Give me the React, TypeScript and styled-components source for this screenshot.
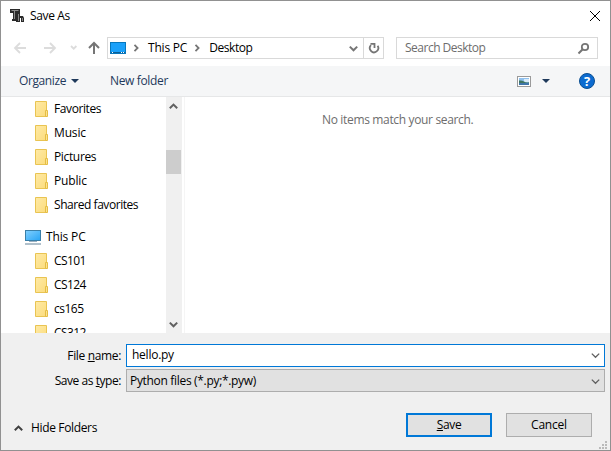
import React from 'react';
import styled, { createGlobalStyle } from 'styled-components';

const GlobalStyle = createGlobalStyle`
  * { box-sizing: border-box; }
  body { margin: 0; overflow: hidden; }
`;

const Dialog = styled.div`
  width: 611px;
  height: 451px;
  border: 1px solid #919191;
  background: #fff;
  color: #000;
  font: 12px/16px "Open Sans", "Noto Sans", sans-serif;
  display: flex;
  flex-direction: column;
  overflow: hidden;
  svg { display: block; flex: none; }
`;

const Label = styled.span<{ $track?: number }>`
  letter-spacing: ${(p) => p.$track ?? -0.35}px;
  white-space: pre;
  flex: none;
`;

const TitleBar = styled.header`
  height: 30px;
  flex: none;
  display: flex;
  align-items: center;
  padding: 0 9px;
`;

const Title = styled(Label)`
  margin-left: 4px;
`;

const CloseButton = styled.button`
  margin-left: auto;
  border: 0;
  padding: 0;
  background: none;
`;

const NavBar = styled.nav`
  height: 35px;
  flex: none;
  display: flex;
  align-items: center;
  padding: 0 12px 1px;
`;

const NavArrows = styled.div`
  width: 94px;
  display: flex;
  align-items: center;
`;

const Field = styled.div`
  height: 22px;
  border: 1px solid #d9d9d9;
  display: flex;
  align-items: center;
`;

const AddressBar = styled(Field)`
  width: 277px;
  padding-left: 2px;
`;

const Crumb = styled(Label)`
  margin-left: 8px;
`;

const AddressEnd = styled.div`
  margin-left: auto;
  display: flex;
  height: 20px;
  align-items: center;
`;

const Refresh = styled.div`
  width: 20px;
  height: 20px;
  margin-left: 5px;
  border-left: 1px solid #d9d9d9;
  display: grid;
  place-items: center;
`;

const SearchBox = styled(Field)`
  width: 202px;
  margin-left: 12px;
  padding: 0 7px 0 8px;
  justify-content: space-between;
  color: #6d6d6d;
`;

const CommandBar = styled.div`
  height: 31px;
  flex: none;
  display: flex;
  align-items: center;
  padding: 0 15px 0 18px;
  background: #f5f6f7;
  border-bottom: 1px solid #e6e7e8;
  color: #1e395b;
`;

const NewFolder = styled(Label)`
  margin-left: 31px;
`;

const Tools = styled.div`
  margin-left: auto;
  display: flex;
  align-items: center;
`;

const Main = styled.main`
  height: 236px;
  flex: none;
  display: flex;
`;

const Tree = styled.div`
  width: 165px;
  overflow: hidden;
`;

const TreeRow = styled.div<{ $root?: boolean }>`
  height: 24px;
  display: flex;
  align-items: center;
  gap: ${(p) => (p.$root ? 5 : 6)}px;
  padding-left: ${(p) => (p.$root ? 24 : 34)}px;
  margin-top: ${(p) => (p.$root ? 8 : 0)}px;
`;

const Scrollbar = styled.div`
  width: 16px;
  background: #f0f0f0;
  display: flex;
  flex-direction: column;
  align-items: center;
  padding: 5px 1px 4px 0;
`;

const Thumb = styled.div`
  width: 15px;
  height: 24px;
  margin: 39px 0 auto;
  background: #cdcdcd;
`;

const FileList = styled.section`
  flex: 1;
  margin-left: 2px;
  border-left: 1px solid #f5f5f5;
  padding: 15px 0 0 137px;
  color: #6d6d6d;
`;

const Footer = styled.footer`
  flex: 1;
  background: #f0f0f0;
  display: flex;
  flex-direction: column;
`;

const Form = styled.div`
  padding-top: 11px;
`;

const FormRow = styled.label`
  display: flex;
  align-items: center;
  height: 23px;
  margin: 0 5px 2px 0;
`;

const FormLabel = styled.span`
  width: 125px;
  padding-right: 5px;
  display: flex;
  justify-content: flex-end;
`;

const Combo = styled.div<{ $focused?: boolean }>`
  flex: 1;
  height: 23px;
  display: flex;
  align-items: center;
  justify-content: space-between;
  padding: ${(p) => (p.$focused ? '0 4px 1px 5px' : '1px 4px 0 3px')};
  border: 1px solid ${(p) => (p.$focused ? '#0078d7' : '#adadad')};
  background: ${(p) => (p.$focused ? '#fff' : '#e1e1e1')};
`;

const Actions = styled.div`
  height: 24px;
  display: flex;
  align-items: flex-start;
  margin-top: 19px;
  padding-left: 13px;
`;

const HideFolders = styled.div`
  width: 392px;
  height: 30px;
  display: flex;
  align-items: center;
  gap: 8px;
`;

const Button = styled.button<{ $primary?: boolean }>`
  width: 86px;
  height: 24px;
  padding: 0 0 1px;
  margin-right: 14px;
  font: inherit;
  color: #000;
  background: #e1e1e1;
  border: ${(p) => (p.$primary ? '2px solid #0078d7' : '1px solid #adadad')};
`;

const Grip = styled.div`
  margin: auto 3px 1px auto;
`;

const Chevron = ({ dir = 'down', color = '#606060', size = 9, weight = 2 }: {
  dir?: 'down' | 'up' | 'right'; color?: string; size?: number; weight?: number;
}) => {
  const d = { down: 'M.8 2.6 4.5 6.3 8.2 2.6', up: 'M.8 6.3 4.5 2.6 8.2 6.3', right: 'M2.8 1 6.3 4.5 2.8 8' }[dir];
  return (
    <svg width={size} height={size} viewBox="0 0 9 9" fill="none" stroke={color} strokeWidth={weight}>
      <path d={d} />
    </svg>
  );
};

const ThonnyIcon = () => (
  <svg width="16" height="16" viewBox="0 0 16 16" fill="none">
    <path d="M0 1h10v4H7v6h1v2H2v-2h1V5H0z" fill="#2a2a2a" />
    <path d="M7 5h3v3h3l1 2v4h-3v-4h-1v4H6v-2h1z" fill="#2a2a2a" />
    <path d="M1.5 2.5h7M4.5 3v8" stroke="#8c8c8c" />
    <path d="M8.5 6v7M12.5 10v3" stroke="#858585" />
  </svg>
);

const UpArrow = () => (
  <svg width="12" height="14" viewBox="0 0 12 14" fill="none" stroke="#757575" strokeWidth="2">
    <path d="M6 13V2.5M1 7l5-5 5 5" />
  </svg>
);

const NavIcons = () => (
  <NavArrows>
    <svg width="75" height="14" viewBox="0 0 75 14" fill="none" stroke="#dcdcdc" strokeWidth="1.8">
      <path d="M13 7H2.2M7 2 2 7l5 5M31 7h11M37 2l5 5-5 5" />
      <path d="m58 5 2.7 2.7L63.4 5" />
    </svg>
    <UpArrow />
  </NavArrows>
);

const ScreenIcon = () => (
  <svg width="16" height="12" viewBox="0 0 16 12">
    <rect x=".5" y=".5" width="15" height="11" fill="#1ba1fa" stroke="#0878bd" />
    <path d="M1 10.5h14" stroke="#0b5f96" />
    <path d="M2 10.5h1M11 10.5h1M13 10.5h1" stroke="#fff" />
  </svg>
);

const ComputerIcon = () => (
  <svg width="16" height="16" viewBox="0 0 16 16">
    <defs>
      <linearGradient id="screen" x2="1" y2="1">
        <stop stopColor="#82d0ff" />
        <stop offset="1" stopColor="#27a4f5" />
      </linearGradient>
    </defs>
    <rect x=".5" y="1.5" width="15" height="10" fill="url(#screen)" stroke="#3a7fa8" />
    <path d="M4 12.5h8" stroke="#9cb1c1" />
    <path d="M0 15h16" stroke="#8fa5b5" strokeWidth="1.4" />
  </svg>
);

const FolderIcon = () => (
  <svg width="13" height="16" viewBox="0 0 13 16">
    <defs>
      <linearGradient id="folder" x2="1" y2="1">
        <stop stopColor="#ffeaa6" />
        <stop offset="1" stopColor="#fbdc7c" />
      </linearGradient>
    </defs>
    <path d="M.5.5h11v15H.5z" fill="url(#folder)" stroke="#e9c452" />
    <path d="M10.5 9.5h2v6h-2z" fill="#fce38e" stroke="#e5bd45" />
  </svg>
);

const RefreshIcon = () => (
  <svg width="12" height="12" viewBox="0 0 12 12" fill="none" stroke="#757575" strokeWidth="1.8">
    <path d="M3 3.2A4.2 4.2 0 1 0 9.6 3.8" />
    <path d="M2.5 1.9h4v4.2" />
  </svg>
);

const SearchIcon = () => (
  <svg width="13" height="13" viewBox="0 0 13 13" fill="none" stroke="#757575">
    <circle cx="8" cy="5" r="3.2" strokeWidth="1.8" />
    <path d="M5.7 7.3 1.5 11.5" strokeWidth="2" />
  </svg>
);

const PictureIcon = () => (
  <svg width="14" height="11" viewBox="0 0 14 11">
    <rect x=".5" y=".5" width="13" height="10" fill="#fff" stroke="#9a9a9a" />
    <path d="M2 2h10v7H2z" fill="#8fc0ee" />
    <path d="M7 3h5v3H7z" fill="#d9ebf9" />
    <path d="M2 4.5q3-.5 5 1t5 .8V7H2z" fill="#3f7560" />
    <path d="M2 7h10v2H2z" fill="#3f75aa" />
  </svg>
);

const Caret = () => (
  <svg width="8" height="4" viewBox="0 0 8 4"><path d="M0 0h8L4 4z" fill="#1e395b" /></svg>
);

const HelpBadge = styled.span`
  width: 16px;
  height: 16px;
  margin-left: 29px;
  border-radius: 50%;
  border: 1px solid #0b4f92;
  background: #0c6bd0;
  color: #fff;
  font-weight: 700;
  font-size: 13px;
  line-height: 14px;
  text-align: center;
`;

const ViewCaret = styled.span`
  margin-left: 11px;
`;

const OrganizeCaret = styled.span`
  margin-left: 5px;
`;

const CrumbArrow = styled.span`
  margin-left: 6px;
`;

const favorites: [string, number][] = [
  ['Favorites', -0.4],
  ['Music', -0.15],
  ['Pictures', -0.35],
  ['Public', -0.15],
  ['Shared favorites', -0.45],
];

const folders: [string, number][] = [
  ['CS101', -0.6],
  ['CS124', -0.6],
  ['cs165', -0.5],
  ['CS312', -0.6],
];

const FolderRow = ({ name, track }: { name: string; track: number }) => (
  <TreeRow>
    <FolderIcon />
    <Label $track={track}>{name}</Label>
  </TreeRow>
);

export default function App() {
  return (
    <>
      <GlobalStyle />
      <Dialog>
        <TitleBar>
          <ThonnyIcon />
          <Title>Save As</Title>
          <CloseButton aria-label="Close">
            <svg width="12" height="12" viewBox="0 0 12 12" stroke="#000">
              <path d="m1 1 10 10M11 1 1 11" />
            </svg>
          </CloseButton>
        </TitleBar>
        <NavBar>
          <NavIcons />
          <AddressBar>
            <ScreenIcon />
            <CrumbArrow><Chevron dir="right" color="#757575" size={8} /></CrumbArrow>
            <Crumb $track={-0.2}>This PC</Crumb>
            <CrumbArrow><Chevron dir="right" color="#757575" size={8} /></CrumbArrow>
            <Crumb $track={-0.45}>Desktop</Crumb>
            <AddressEnd>
              <Chevron color="#757575" />
              <Refresh><RefreshIcon /></Refresh>
            </AddressEnd>
          </AddressBar>
          <SearchBox>
            <Label $track={-0.5}>Search Desktop</Label>
            <SearchIcon />
          </SearchBox>
        </NavBar>
        <CommandBar>
          <Label $track={-0.4}>Organize</Label>
          <OrganizeCaret><Caret /></OrganizeCaret>
          <NewFolder>New folder</NewFolder>
          <Tools>
            <PictureIcon />
            <ViewCaret><Caret /></ViewCaret>
            <HelpBadge>?</HelpBadge>
          </Tools>
        </CommandBar>
        <Main>
          <Tree>
            {favorites.map(([name, track]) => <FolderRow key={name} name={name} track={track} />)}
            <TreeRow $root>
              <ComputerIcon />
              <Label $track={-0.15}>This PC</Label>
            </TreeRow>
            {folders.map(([name, track]) => <FolderRow key={name} name={name} track={track} />)}
          </Tree>
          <Scrollbar>
            <Chevron dir="up" />
            <Thumb />
            <Chevron />
          </Scrollbar>
          <FileList><Label $track={-0.34}>No items match your search.</Label></FileList>
        </Main>
        <Footer>
          <Form>
            <FormRow>
              <FormLabel><Label>File <u>n</u>ame:</Label></FormLabel>
              <Combo $focused><Label $track={-0.25}>hello.py</Label><Chevron weight={1.3} /></Combo>
            </FormRow>
            <FormRow>
              <FormLabel><Label $track={-0.45}>Save as <u>t</u>ype:</Label></FormLabel>
              <Combo><Label $track={-0.32}>Python files (*.py;*.pyw)</Label><Chevron weight={1.3} /></Combo>
            </FormRow>
          </Form>
          <Actions>
            <HideFolders>
              <Chevron dir="up" color="#404040" />
              <Label>Hide Folders</Label>
            </HideFolders>
            <Button $primary><Label><u>S</u>ave</Label></Button>
            <Button><Label $track={-0.2}>Cancel</Label></Button>
          </Actions>
          <Grip>
            <svg width="8" height="8" viewBox="0 0 8 8" fill="#bababa">
              <path d="M6 0h2v2H6zM3 3h2v2H3zM6 3h2v2H6zM0 6h2v2H0zM3 6h2v2H3zM6 6h2v2H6z" />
            </svg>
          </Grip>
        </Footer>
      </Dialog>
    </>
  );
}
